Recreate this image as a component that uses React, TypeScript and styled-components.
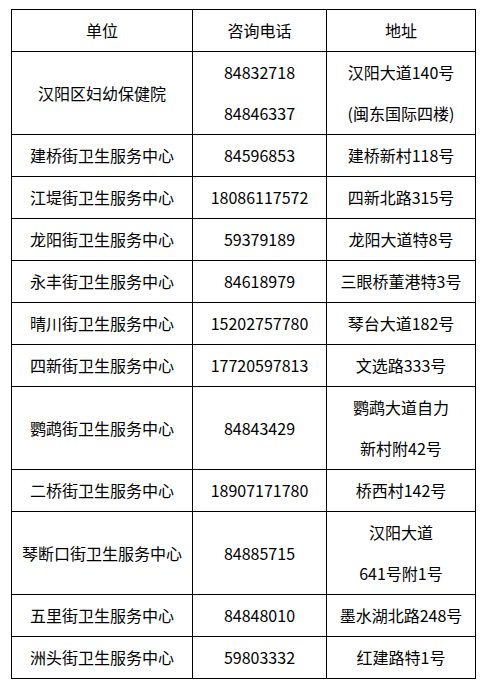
import React from 'react';
import styled, { createGlobalStyle } from 'styled-components';

const GlobalStyle = createGlobalStyle`
    body {
        margin: 0;
        background: #fff;
        font-family: "Noto Sans CJK SC", "Noto Sans", sans-serif;
        color: #000;
    }
`

const Page = styled.div`
    padding: 9px 0 0 11px;
`

const Table = styled.table`
    border-collapse: collapse;
    table-layout: fixed;
    width: 464px;
    font-size: 16px;
`

const Cell = styled.td`
    border: 1px solid #000;
    padding: 0;
    line-height: 41px;
    text-align: center;
    vertical-align: middle;
    white-space: nowrap;
`

const Line = styled.div`
    height: 41px;
`

type Row = {
    unit: string;
    phones: string[];
    address: string[];
}

const rows: Row[] = [
    { unit: '汉阳区妇幼保健院', phones: ['84832718', '84846337'], address: ['汉阳大道140号', '(闽东国际四楼)'] },
    { unit: '建桥街卫生服务中心', phones: ['84596853'], address: ['建桥新村118号'] },
    { unit: '江堤街卫生服务中心', phones: ['18086117572'], address: ['四新北路315号'] },
    { unit: '龙阳街卫生服务中心', phones: ['59379189'], address: ['龙阳大道特8号'] },
    { unit: '永丰街卫生服务中心', phones: ['84618979'], address: ['三眼桥董港特3号'] },
    { unit: '晴川街卫生服务中心', phones: ['15202757780'], address: ['琴台大道182号'] },
    { unit: '四新街卫生服务中心', phones: ['17720597813'], address: ['文选路333号'] },
    { unit: '鹦鹉街卫生服务中心', phones: ['84843429'], address: ['鹦鹉大道自力', '新村附42号'] },
    { unit: '二桥街卫生服务中心', phones: ['18907171780'], address: ['桥西村142号'] },
    { unit: '琴断口街卫生服务中心', phones: ['84885715'], address: ['汉阳大道', '641号附1号'] },
    { unit: '五里街卫生服务中心', phones: ['84848010'], address: ['墨水湖北路248号'] },
    { unit: '洲头街卫生服务中心', phones: ['59803332'], address: ['红建路特1号'] },
]

function Lines({ items }: { items: string[] }) {
    return <>{items.map((t, i) => <Line key={i}>{t}</Line>)}</>
}

export default function App() {
    return <Page>
        <GlobalStyle />
        <Table>
            <colgroup>
                <col style={{ width: 181 }} />
                <col style={{ width: 134 }} />
                <col style={{ width: 149 }} />
            </colgroup>
            <tbody>
                <tr>
                    <Cell>单位</Cell>
                    <Cell>咨询电话</Cell>
                    <Cell>地址</Cell>
                </tr>
                {rows.map(r => (
                    <tr key={r.unit}>
                        <Cell>{r.unit}</Cell>
                        <Cell><Lines items={r.phones} /></Cell>
                        <Cell><Lines items={r.address} /></Cell>
                    </tr>
                ))}
            </tbody>
        </Table>
    </Page>
}
